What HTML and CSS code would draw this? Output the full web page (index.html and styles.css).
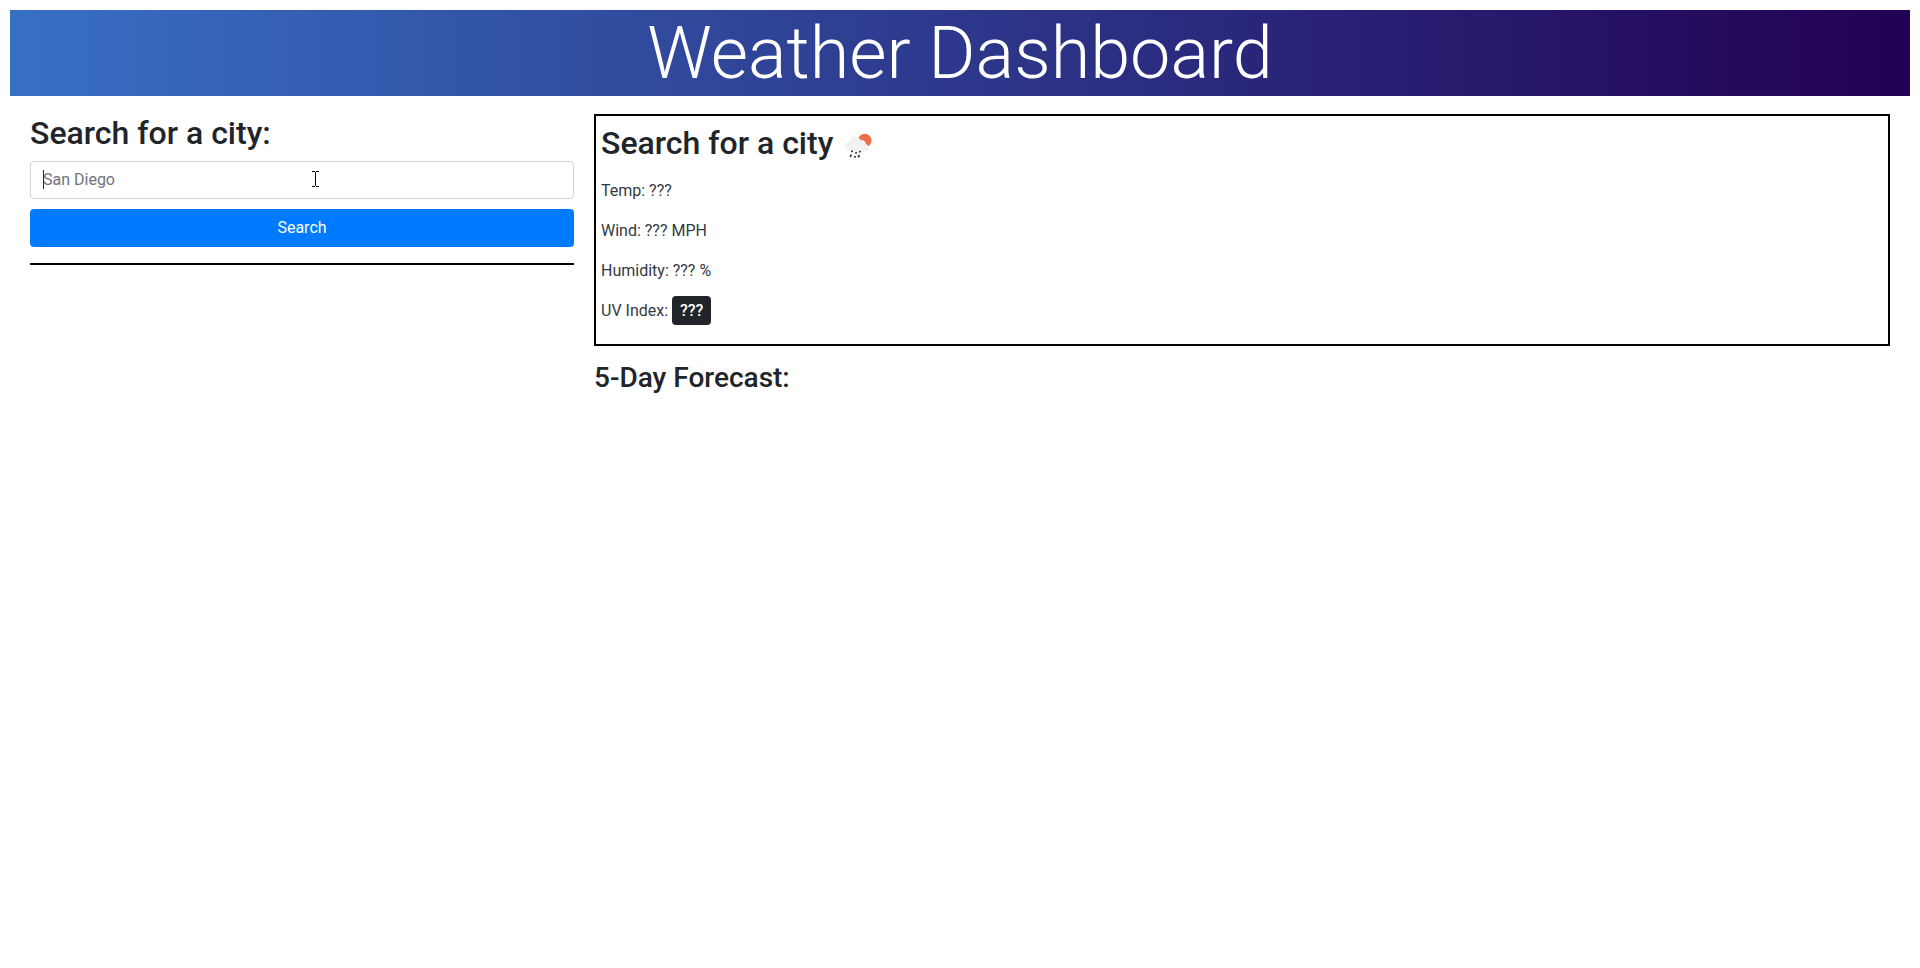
FILE: index.html
```html
<!DOCTYPE html>
<html lang="en">
<head>
<meta charset="utf-8">
<title>Weather Dashboard</title>
<link rel="stylesheet" href="styles.css">
</head>
<body>
<header class="banner"><h1 class="banner-title">Weather Dashboard</h1></header>
<main class="row">
  <aside class="search-col">
    <h2 class="heading">Search for a city:</h2>
    <div class="field">
      <input class="input" type="text" placeholder="San Diego">
      <span class="caret"></span>
      <svg class="pointer" width="7" height="16" viewBox="0 0 7 16" shape-rendering="crispEdges"><path d="M0 .5h3M4 .5h3M3.5 1v14M0 15.5h3M4 15.5h3" stroke="#000" fill="none"/></svg>
    </div>
    <button class="btn" type="button">Search</button>
    <hr class="rule">
  </aside>
  <section class="result-col">
    <div class="today">
      <h2 class="heading">Search for a city<svg class="icon" width="50" height="50" viewBox="0 0 50 50"><circle cx="31.7" cy="19.5" r="6.8" fill="#ec6e4c"/><path d="M16.5 30.2a4.7 4.7 0 0 1 .2-9.4a5.7 5.7 0 0 1 10.8-1.6a4.2 4.2 0 0 1 5.3 3.9a3.8 3.8 0 0 1 1 7.1z" fill="#f2f2f2"/><path d="M19.5 29.5l-.8 1.7M23.4 31l-.8 1.7M27.3 29.8l-.8 1.7M18.3 33.5l-1.1 2.3M22.4 35l-.8 1.7M26.4 34l-1.1 2.3" stroke="#222224" stroke-width="1.6" fill="none"/></svg></h2>
      <p class="stat">Temp: ???</p>
      <p class="stat">Wind: ??? MPH</p>
      <p class="stat">Humidity: ??? %</p>
      <p class="stat">UV Index: <span class="uv">???</span></p>
    </div>
    <h3 class="forecast">5-Day Forecast:</h3>
  </section>
</main>
</body>
</html>
```
FILE: styles.css
```css
*, *::before, *::after { box-sizing: border-box; }
body { margin: 0; padding: 10px; background: #fff; color: #212529; font: 400 16px/1.5 Roboto, sans-serif; }
h1, h2, h3, p { margin: 0; }
.banner { background: linear-gradient(to right, #3870c4, #220053); text-align: center; color: #fff; }
.banner-title { padding-top: 2px; font-size: 72px; font-weight: 300; line-height: 84.4px; }
.row { display: flex; padding: 18px 10px 0; }
.search-col { width: 30%; padding: 0 10px; }
.result-col { width: 70%; padding: 0 10px; }
.heading { font-size: 32px; font-weight: 500; line-height: 1.2; margin-bottom: 8px; }
.field { position: relative; margin-bottom: 10px; }
.input { display: block; width: 100%; height: 38px; padding: 6px 12px; border: 1px solid #ced4da; border-radius: 4px; font: inherit; color: #495057; }
.input::placeholder { color: #6c757d; opacity: 1; }
.caret { position: absolute; left: 13px; top: 9px; width: 1px; height: 19px; background: #212529; }
.pointer { position: absolute; left: 282px; top: 10px; }
.btn { display: block; width: 100%; height: 38px; border: 0; border-radius: 4px; background: #007bff; color: #fff; font: 400 16px/1.5 Roboto, sans-serif; }
.rule { margin: 16px 0; border: 0; border-top: 2px solid #000; }
.today { border: 2px solid #000; padding: 5px; }
.icon { vertical-align: middle; }
.stat { color: #343a40; margin-bottom: 16px; }
.uv { padding: 5px 8px; border-radius: 4px; background: #212529; color: #fff; font-weight: 500; }
.forecast { margin-top: 15px; font-size: 28px; font-weight: 500; line-height: 1.2; }
```
